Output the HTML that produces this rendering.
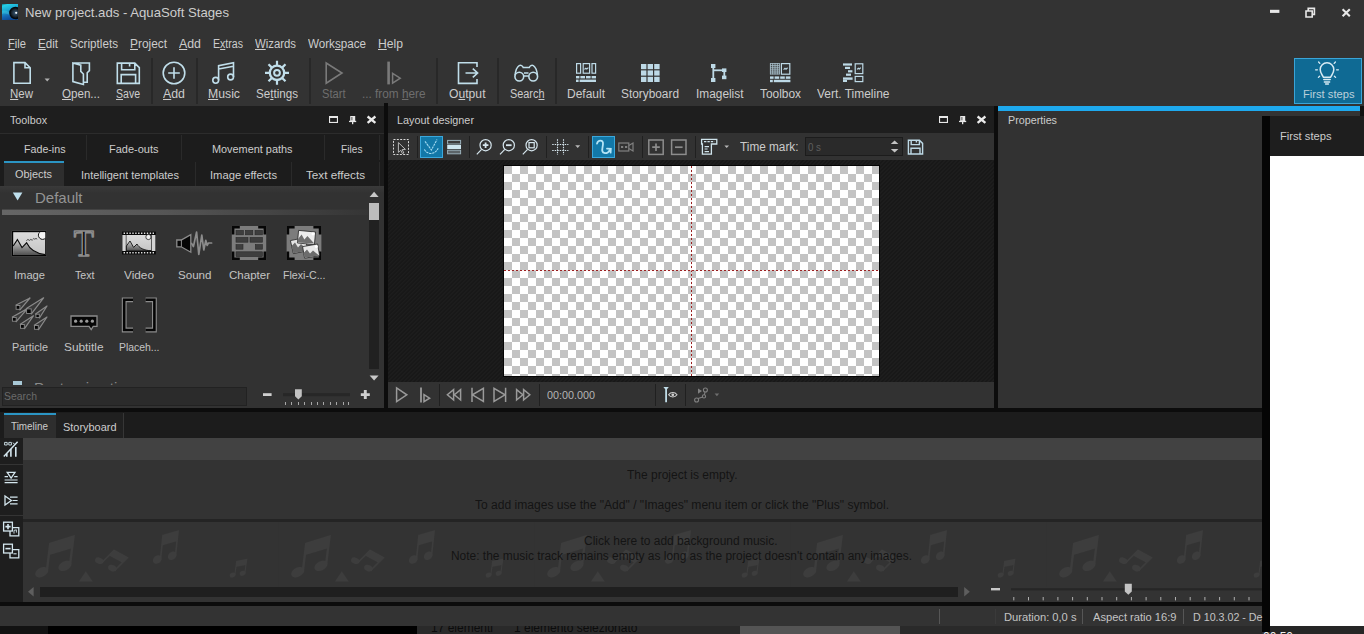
<!DOCTYPE html>
<html><head><meta charset="utf-8"><title>New project.ads - AquaSoft Stages</title>
<style>
html,body{margin:0;padding:0;}
body{width:1364px;height:634px;overflow:hidden;background:#333333;position:relative;font-family:"Liberation Sans",sans-serif;font-size:11px;color:#cccccc;}
.b{position:absolute;}
.t{position:absolute;white-space:nowrap;display:inline-block;transform-origin:0 50%;line-height:16px;height:16px;}
u{text-decoration:underline;text-underline-offset:1px;}
svg{position:absolute;overflow:visible;}
.ic{fill:none;stroke:#c0deea;stroke-width:1.6;}
.ig{fill:none;stroke:#7a7a7a;stroke-width:1.6;}
.sep{position:absolute;width:1px;background:#232323;}
.hatch{background-color:#181818;background-image:repeating-linear-gradient(135deg,rgba(255,255,255,0.022) 0,rgba(255,255,255,0.022) 1.2px,transparent 1.6px,transparent 2.83px);}
.chk{background:repeating-conic-gradient(#c3c3c3 0% 25%,#ffffff 0% 50%) 8px 0/16px 16px;}
</style></head><body>

<!-- ===== title/menu/toolbar background ===== -->
<div class="b" style="left:0;top:0;width:1364px;height:106px;background:#333333"></div>

<!-- dark base under panels -->
<div class="b" style="left:0;top:106px;width:1262px;height:500px;background:#0c0c0c"></div>

<!-- ===== Toolbox panel ===== -->
<div class="b" style="left:0;top:106px;width:384px;height:28px;background:#1e1e1e"></div>
<div class="b" style="left:0;top:133px;width:384px;height:1px;background:#2c2c2c"></div>
<div class="b" style="left:0;top:134px;width:384px;height:52px;background:#1c1c1c"></div>
<div class="b" style="left:4px;top:161px;width:60px;height:25px;background:#2e2e2e"></div>
<div class="b" style="left:4px;top:161px;width:60px;height:2px;background:#2b95c4"></div>
<div class="b" style="left:0;top:186px;width:384px;height:222px;background:#323232"></div>
<div class="b" style="left:0;top:186px;width:384px;height:7px;background:linear-gradient(#3a3a3a,#323232)"></div>
<!-- tab separators -->
<div class="sep" style="left:86px;top:135px;height:25px;background:#2a2a2a"></div>
<div class="sep" style="left:181px;top:135px;height:25px;background:#2a2a2a"></div>
<div class="sep" style="left:324px;top:135px;height:25px;background:#2a2a2a"></div>
<div class="sep" style="left:379px;top:135px;height:25px;background:#2a2a2a"></div>
<div class="sep" style="left:195px;top:162px;height:24px;background:#2a2a2a"></div>
<div class="sep" style="left:291px;top:162px;height:24px;background:#2a2a2a"></div>
<div class="sep" style="left:379px;top:162px;height:24px;background:#2a2a2a"></div>

<!-- ===== Layout designer ===== -->
<div class="b" style="left:388px;top:106px;width:606px;height:27px;background:#1e1e1e"></div>
<div class="b" style="left:388px;top:133px;width:606px;height:27px;background:#323232"></div>
<div class="b hatch" style="left:388px;top:160px;width:606px;height:222px;"></div>
<div class="b" style="left:503px;top:165px;width:377px;height:212px;background:#050505"></div>
<div class="b chk" style="left:504px;top:166px;width:375px;height:210px;"></div>
<div class="b" style="left:691px;top:166px;width:1px;height:210px;background:repeating-linear-gradient(180deg,#9a2020 0,#9a2020 2px,rgba(255,220,220,0.5) 2px,rgba(255,220,220,0.5) 4px)"></div>
<div class="b" style="left:504px;top:270px;width:375px;height:1px;background:repeating-linear-gradient(90deg,#9a2020 0,#9a2020 2px,rgba(255,220,220,0.5) 2px,rgba(255,220,220,0.5) 4px)"></div>
<div class="b" style="left:388px;top:382px;width:606px;height:26px;background:#323232"></div>

<!-- ===== Properties ===== -->
<div class="b" style="left:998px;top:106px;width:264px;height:302px;background:#323232"></div>
<div class="b" style="left:998px;top:106px;width:362px;height:5px;background:#1ea9ee"></div>
<div class="b" style="left:1360px;top:106px;width:4px;height:10px;background:#111"></div>

<!-- ===== First steps panel ===== -->
<div class="b" style="left:1262px;top:116px;width:8px;height:516px;background:#050505"></div>
<div class="b" style="left:1270px;top:116px;width:94px;height:40px;background:#1e1e1e"></div>
<div class="b" style="left:1270px;top:156px;width:94px;height:470px;background:#ffffff"></div>
<div class="b" style="left:1270px;top:626px;width:94px;height:8px;background:#262626"></div>

<!-- ===== First steps button ===== -->
<div class="b" style="left:1294px;top:58px;width:66px;height:44px;background:#0f6a94;border:1px solid #3aa5d8"></div>

<!-- ===== Timeline ===== -->
<div class="b" style="left:0;top:412px;width:1262px;height:26px;background:#1c1c1c"></div>
<div class="b" style="left:4px;top:413px;width:52px;height:25px;background:#2e2e2e"></div>
<div class="b" style="left:4px;top:413px;width:52px;height:2px;background:#2b95c4"></div>
<div class="b" style="left:56px;top:413px;width:67px;height:25px;background:#202020"></div>
<div class="sep" style="left:123px;top:413px;height:25px;background:#363636"></div>
<div class="b" style="left:0;top:438px;width:23px;height:164px;background:#1e1e1e"></div>
<div class="b" style="left:23px;top:438px;width:1239px;height:22px;background:#424242"></div>
<div class="b" style="left:23px;top:460px;width:1239px;height:59px;background:#333333"></div>
<div class="b" style="left:23px;top:519px;width:1239px;height:3px;background:#242424"></div>
<div class="b" style="left:23px;top:522px;width:1239px;height:80px;background:#333333"></div>
<div class="b" style="left:40px;top:587px;width:918px;height:10px;background:#1f1f1f"></div>

<!-- ===== Status bar ===== -->
<div class="b" style="left:0;top:606px;width:1262px;height:20px;background:#333333"></div>
<div class="b" style="left:0;top:626px;width:1262px;height:8px;background:#2a2a2a"></div>
<div class="b" style="left:0;top:626px;width:48px;height:8px;background:#121212"></div>
<div class="b" style="left:48px;top:626px;width:369px;height:8px;background:#000"></div>
<div class="b" style="left:740px;top:626px;width:160px;height:8px;background:#545454"></div>

<!-- ===== App icon ===== -->
<svg style="left:2px;top:4px;overflow:hidden" width="16" height="16.4" viewBox="0 0 16 16.4">
<defs><linearGradient id="ag" x1="0" y1="0" x2="0.3" y2="1"><stop offset="0" stop-color="#0e6e7c"/><stop offset="0.12" stop-color="#25cfe6"/><stop offset="0.45" stop-color="#1aa4d0"/><stop offset="0.75" stop-color="#1468b4"/><stop offset="1" stop-color="#0d4a96"/></linearGradient>
<radialGradient id="lg" cx="0.5" cy="0.5" r="0.5"><stop offset="0" stop-color="#3a5a78"/><stop offset="0.55" stop-color="#20303e"/><stop offset="1" stop-color="#06090c"/></radialGradient></defs>
<rect x="0" y="0" width="16" height="16.4" fill="url(#ag)"/>
<path d="M0,7 C4,5.5 7,8.5 10,9.5 L10,12 C6,10 3,9 0,10 Z" fill="#4fd6e8" opacity="0.35"/>
<circle cx="13.4" cy="9" r="5.6" fill="url(#lg)"/><circle cx="13.4" cy="9" r="5.6" fill="none" stroke="#03080c" stroke-width="1.2"/><circle cx="14.2" cy="8.8" r="1.1" fill="#f2f6fa"/>
</svg>
<!-- window buttons -->
<svg style="left:1265px;top:5px" width="95" height="16" viewBox="0 0 95 16">
<rect x="5" y="4.8" width="9.4" height="3.1" fill="#e8e8e8"/>
<path d="M43.2,5.6 V3.4 H49.4 V9.4 H47.2 M41,6 h6.2 v6 h-6.2 z" fill="none" stroke="#e8e8e8" stroke-width="1.6"/>
<path d="M77.6,4.2 l7.2,7 M84.8,4.2 l-7.2,7" stroke="#e8e8e8" stroke-width="2.1" fill="none"/>
</svg>

<!-- ===== Main toolbar separators ===== -->
<div class="sep" style="left:151px;top:58px;height:46px;width:2px;background:#282828"></div>
<div class="sep" style="left:196px;top:58px;height:46px;width:2px;background:#282828"></div>
<div class="sep" style="left:309px;top:58px;height:46px;width:2px;background:#282828"></div>
<div class="sep" style="left:436px;top:58px;height:46px;width:2px;background:#282828"></div>
<div class="sep" style="left:497px;top:58px;height:46px;width:2px;background:#282828"></div>
<div class="sep" style="left:555px;top:58px;height:46px;width:2px;background:#282828"></div>
<div class="b" style="left:384px;top:103px;width:4px;height:3px;background:#0c0c0c"></div>

<!-- ===== Main toolbar icons (one svg in page coords) ===== -->
<svg style="left:0;top:0" width="1364" height="110" viewBox="0 0 1364 110">
<g class="ic" stroke-width="2.15" stroke-linejoin="miter">
<!-- New -->
<path d="M13.9,62.6 H25 L30.2,67.8 V83.3 H13.9 Z M25,62.6 V67.8 H30.2"/>
<!-- Open -->
<path d="M72.9,63 H89.4 V70.6 L87.2,72.8 V82.3 H83.6 M72.9,63 L80.8,65.2 V71.4 L83.4,74 V84.4 L72.9,81.6 Z"/>
<!-- Save -->
<path d="M117.3,63.1 H134.8 L139.3,67.6 V83.4 H117.3 Z M121.6,63.1 V69.8 H134.8 V63.1 M129.6,63.1 V66.6 M121.2,83.4 V74.6 H135.6 V83.4"/>
<!-- Add -->
<circle cx="174" cy="73" r="10.8"/><path d="M174,67.2 V78.8 M168.2,73 H179.8"/>
<!-- Music -->
<circle cx="215.7" cy="80.3" r="2.9"/><circle cx="230.6" cy="77" r="2.9"/>
<path d="M218.6,80.3 V65.6 L233.5,62.8 V77 M218.6,69 L233.5,66.2"/>
<!-- Settings -->
<circle cx="277" cy="72.8" r="7.2" stroke-width="2.3"/><circle cx="277" cy="72.8" r="2.9" stroke-width="2"/>
<path d="M277.0,65.2 L277.0,60.8 M282.4,67.4 L285.5,64.3 M284.6,72.8 L289.0,72.8 M282.4,78.2 L285.5,81.3 M277.0,80.4 L277.0,84.8 M271.6,78.2 L268.5,81.3 M269.4,72.8 L265.0,72.8 M271.6,67.4 L268.5,64.3" stroke-width="2.2"/>
<!-- Output -->
<path d="M477,67 V62.8 H458.5 V83.4 H477 V79"/><path d="M465.5,73 H477.6 M472.8,68.6 L477.6,73 L472.8,77.4"/>
<!-- Search -->
<circle cx="519.3" cy="76.6" r="4.4" stroke-width="1.6"/><circle cx="533.2" cy="76.6" r="4.4" stroke-width="1.6"/>
<path d="M515,75.4 C515.6,70.5 517.4,66.6 519.2,65.6 C520.8,64.9 522.6,65.8 523.2,67.6 H529.3 C529.9,65.8 531.7,64.9 533.3,65.6 C535.1,66.6 536.9,70.5 537.5,75.4 M523.7,76 H528.8 M524,73 H528.5" stroke-width="1.5"/>
</g>
<!-- disabled: Start / from here -->
<g class="ig" stroke-width="2.1" stroke="#7c7c7c">
<path d="M326.2,63 V83.2 L342,73 Z"/>
<path d="M388.6,61.6 V84.4" stroke-width="2.6"/><path d="M392.6,73.4 V83.2 L400.2,78.2 Z" stroke-width="1.5"/>
</g>
<!-- dropdown arrow after New -->
<path d="M44.6,78.6 h5.2 l-2.6,2.8 z" fill="#b0b0b0"/>
<!-- Default layout icon -->
<g fill="none" stroke="#bdd9e6" stroke-width="1.2">
<rect x="576.6" y="63.6" width="4" height="9.6"/><rect x="583.2" y="63.6" width="6.4" height="9.6"/><rect x="592" y="63.6" width="3.6" height="9.6"/>
<path d="M584.4,69.4 l1.4,-1.2 l1,0.8 l1.6,-1.4"/>
</g>
<g fill="#bdd9e6">
<rect x="576" y="76" width="3.4" height="2.4"/><rect x="580.4" y="76" width="4.6" height="2.4"/><rect x="586" y="76" width="4.6" height="2.4"/><rect x="591.6" y="76" width="4.4" height="2.4"/>
<rect x="576" y="79.6" width="2.6" height="2.4"/><rect x="579.6" y="79.6" width="16.4" height="2.4"/>
<!-- Storyboard grid -->
<rect x="641" y="64" width="5.4" height="5.2"/><rect x="647.6" y="64" width="5.4" height="5.2"/><rect x="654.2" y="64" width="5.4" height="5.2"/>
<rect x="641" y="70.4" width="5.4" height="5.2"/><rect x="647.6" y="70.4" width="5.4" height="5.2"/><rect x="654.2" y="70.4" width="5.4" height="5.2"/>
<rect x="641" y="76.8" width="5.4" height="5.2"/><rect x="647.6" y="76.8" width="5.4" height="5.2"/><rect x="654.2" y="76.8" width="5.4" height="5.2"/>
<!-- Imagelist -->
<rect x="711" y="64" width="4.4" height="4"/><rect x="711" y="78" width="4.4" height="4"/><rect x="722" y="68.4" width="4.4" height="3.6"/><rect x="722" y="75.6" width="4.4" height="3.6"/>
<rect x="712.4" y="66" width="1.8" height="14"/><rect x="713" y="69.4" width="11" height="1.8"/><rect x="723.4" y="70" width="1.8" height="8"/>
<!-- Toolbox icon -->
<rect x="770" y="76.4" width="3.6" height="2.4"/><rect x="774.6" y="76.4" width="4.6" height="2.4"/><rect x="780.2" y="76.4" width="4.6" height="2.4"/><rect x="785.8" y="76.4" width="4.6" height="2.4"/>
<rect x="770" y="79.8" width="2.8" height="2.4"/><rect x="773.8" y="79.8" width="16.6" height="2.4"/>
<!-- Vert timeline bars -->
<rect x="843" y="63.4" width="9" height="2.2"/><rect x="845" y="66.8" width="5" height="2.2"/><rect x="848" y="70.2" width="4.4" height="2.2"/><rect x="846" y="73.6" width="5" height="2.2"/><rect x="843" y="77.4" width="9.6" height="2.4"/><rect x="843" y="80" width="4" height="2"/>
</g>
<g fill="none" stroke="#bdd9e6" stroke-width="1.2">
<rect x="781.4" y="63.6" width="8.4" height="10.6"/><path d="M783.6,69.6 l1.4,-1.2 l1,0.8 l1.6,-1.4"/>
<rect x="855.2" y="63.8" width="7.6" height="9.8"/><path d="M857,69.4 l1.4,-1.2 l1,0.8 l1.4,-1.4"/>
<rect x="855.2" y="76.4" width="7.6" height="5.2"/>
</g>
<!-- toolbox fine grid -->
<g stroke="#bdd9e6" stroke-width="0.9" opacity="0.85">
<path d="M770,63.6 H779.6 M770,65.7 H779.6 M770,67.8 H779.6 M770,69.9 H779.6 M770,72 H779.6 M770,74 H779.6"/>
<path d="M770.4,63.2 V74.4 M772.7,63.2 V74.4 M775,63.2 V74.4 M777.3,63.2 V74.4 M779.4,63.2 V74.4"/>
</g>
<!-- First steps bulb -->
<g fill="none" stroke="#d8ebf4" stroke-width="1.5" stroke-linecap="round">
<path d="M1323.4,77.2 C1322.4,75 1320.2,73.4 1320.2,69.6 A6.8,6.8 0 0 1 1333.8,69.6 C1333.8,73.4 1331.6,75 1330.6,77.2 Z"/>
<path d="M1323.8,79.6 H1330.2 M1324.4,82 H1329.6 M1325.6,84 H1328.4"/>
<path d="M1315.6,69.8 H1317.4 M1336.6,69.8 H1338.4 M1318.6,62 L1319.8,63.4 M1335.4,62 L1334.2,63.4 M1318.4,77.4 L1319.6,76.2 M1335.6,77.4 L1334.4,76.2" stroke-width="1.3"/>
</g>
</svg>
<!-- ===== Panel header icons (max / pin / close) ===== -->
<svg style="left:0;top:100px" width="1364" height="40" viewBox="0 100 1364 40">
<g transform="translate(-610,0)">
<rect x="939" y="116" width="9" height="7" fill="#e8e8e8"/><rect x="940.1" y="118" width="6.8" height="3.9" fill="#1e1e1e"/>
<rect x="960.2" y="116" width="5" height="5.2" fill="#e8e8e8"/><rect x="961.4" y="117" width="1" height="3.4" fill="#555"/><rect x="959" y="120.8" width="7.2" height="1.3" fill="#e8e8e8"/><rect x="962" y="122" width="1.3" height="2.2" fill="#e8e8e8"/>
<path d="M977.6,116.5 l7.8,6.3 M985.4,116.5 l-7.8,6.3" stroke="#ececec" stroke-width="2.3" fill="none"/>
</g>
<g transform="translate(0,0)">
<rect x="939" y="116" width="9" height="7" fill="#e8e8e8"/><rect x="940.1" y="118" width="6.8" height="3.9" fill="#1e1e1e"/>
<rect x="960.2" y="116" width="5" height="5.2" fill="#e8e8e8"/><rect x="961.4" y="117" width="1" height="3.4" fill="#555"/><rect x="959" y="120.8" width="7.2" height="1.3" fill="#e8e8e8"/><rect x="962" y="122" width="1.3" height="2.2" fill="#e8e8e8"/>
<path d="M977.6,116.5 l7.8,6.3 M985.4,116.5 l-7.8,6.3" stroke="#ececec" stroke-width="2.3" fill="none"/>
</g>
</svg>

<!-- ===== Layout designer toolbar ===== -->
<div class="sep" style="left:417px;top:136px;height:22px;background:#202020"></div>
<div class="sep" style="left:469px;top:136px;height:22px;background:#202020"></div>
<div class="sep" style="left:546px;top:136px;height:22px;background:#202020"></div>
<div class="sep" style="left:588px;top:136px;height:22px;background:#202020"></div>
<div class="sep" style="left:642px;top:136px;height:22px;background:#202020"></div>
<div class="sep" style="left:695px;top:136px;height:22px;background:#202020"></div>
<div class="b" style="left:420px;top:136px;width:21px;height:20px;background:#1278a8;border:1px solid #3aa8dc"></div>
<div class="b" style="left:592px;top:136px;width:21px;height:20px;background:#1278a8;border:1px solid #3aa8dc"></div>
<div class="b" style="left:805px;top:137px;width:96px;height:17px;background:#2a2a2a;border:1px solid #1c1c1c"></div>
<svg style="left:385px;top:130px" width="560" height="32" viewBox="385 130 560 32">
<!-- select -->
<rect x="393.5" y="139.5" width="15" height="15" fill="none" stroke="#d8d8d8" stroke-width="1" stroke-dasharray="2 1.33"/>
<path d="M398.4,142.6 V152.4 L400.8,150.2 L402.4,153.6 L403.8,153 L402.2,149.6 L405.4,149.4 Z" fill="#2c2c2c" stroke="#c8c8c8" stroke-width="0.9"/>
<!-- active V -->
<g fill="none" stroke="#a4dcf2" stroke-width="1.05" stroke-dasharray="2.4 0.7">
<path d="M425,141.4 L431.4,150 L437,139.6"/><path d="M424.4,149.4 C427,155 435,155 438.2,148.2"/>
</g>
<!-- layers -->
<rect x="447.6" y="140.4" width="13" height="3.6" fill="#3a3a3a" stroke="#9ab0ba" stroke-width="1"/>
<rect x="447.2" y="145" width="13.8" height="4" fill="#cfe6ef"/>
<rect x="447.6" y="150.2" width="13" height="3.6" fill="#5c6468" stroke="#9ab0ba" stroke-width="1"/>
<!-- zoom icons -->
<g fill="none" stroke="#d6e6ee" stroke-width="1.2">
<circle cx="485.6" cy="145.2" r="5.6"/><path d="M481.6,149.4 L476.8,154.4"/><path d="M485.6,142.4 V148 M482.8,145.2 H488.4" stroke-width="1.8"/>
<circle cx="508.8" cy="145.2" r="5.6"/><path d="M504.8,149.4 L500,154.4"/><path d="M506,145.2 H511.6" stroke-width="1.8"/>
<circle cx="531.6" cy="145.2" r="5.6"/><path d="M527.6,149.4 L522.8,154.4"/><rect x="529" y="142.6" width="5.2" height="5.2" stroke-width="1.2"/>
</g>
<!-- grid -->
<g fill="none" stroke="#d6e6ee" stroke-width="1.1" stroke-dasharray="1.5 1">
<path d="M557.5,139.2 V154.8 M563.5,139.2 V154.8 M552.2,144.5 H568.4 M552.2,150.5 H568.4"/>
</g>
<path d="M575.2,145.2 h5 l-2.5,2.8 z" fill="#b8b8b8"/>
<!-- curvy arrow -->
<path d="M597,143.6 C598,139.6 603.4,139.4 603,144 C602.6,148.4 600.6,152.6 605,153.2 C607.4,153.4 609,151.6 610.4,149.4 M607,148.6 L610.8,148.8 L610.6,152.6" fill="none" stroke="#b4e4f6" stroke-width="1.8" stroke-linecap="round"/>
<!-- camera -->
<g fill="none" stroke="#808080" stroke-width="1.2">
<rect x="618.8" y="143" width="10" height="8"/><path d="M628.8,145.6 L633,143 V151 L628.8,148.4"/><path d="M621,147 h2.2 M625,147 h2.2" stroke-width="1.8"/>
</g>
<!-- plus / minus boxes -->
<g fill="none" stroke="#8c8c8c" stroke-width="1.5">
<rect x="648.8" y="140" width="14.4" height="14.4"/><path d="M656,143.4 V151 M652.2,147.2 H659.8" stroke-width="1.7"/>
<rect x="671.6" y="140" width="14.4" height="14.4"/><path d="M675,147.2 H682.6" stroke-width="1.7"/>
</g>
<!-- align -->
<g fill="none" stroke="#cfe4ec" stroke-width="1.3">
<path d="M701.6,139.4 H716.8 V144 H711.4 V154.2 H702.4 V144 H701.6 Z"/><path d="M704,141.6 h10.4" stroke-dasharray="2.4 1"/><path d="M704.6,146.6 h4.4 M704.6,149 h3 M704.6,151.6 h4.4" stroke-width="1.1"/>
</g>
<path d="M724.4,145.4 h4.6 l-2.3,2.6 z" fill="#b8b8b8"/>
<!-- spinner -->
<path d="M890.8,144 l3.8,-3.6 l3.8,3.6 z M890.8,149 l3.8,3.6 l3.8,-3.6 z" fill="#c4c4c4"/>
<!-- save small -->
<g fill="none" stroke="#bdd9e6" stroke-width="1.4">
<path d="M908.4,140.2 H919.4 L922.6,143.4 V154 H908.4 Z M911.2,140.2 V144.6 H919.4 V140.2 M916.4,140.2 V142.6 M911,154 V148.2 H920 V154"/>
</g>
</svg>

<!-- ===== Playback bar ===== -->
<div class="sep" style="left:439px;top:384px;height:22px;background:#202020"></div>
<div class="sep" style="left:539px;top:384px;height:22px;background:#202020"></div>
<div class="sep" style="left:655px;top:384px;height:22px;background:#202020"></div>
<div class="sep" style="left:685px;top:384px;height:22px;background:#202020"></div>
<svg style="left:385px;top:380px" width="350" height="30" viewBox="385 380 350 30">
<g fill="none" stroke="#9a9a9a" stroke-width="1.5" stroke-linejoin="miter">
<path d="M396.6,388 V401.6 L406.8,394.8 Z"/>
<path d="M421,387.4 V402.4" stroke-width="1.8"/><path d="M424,394.6 V401.6 L429.6,398.2 Z"/>
<path d="M453.6,389.6 V400 L447.4,394.8 Z M460.6,389.6 V400 L454.4,394.8 Z"/>
<path d="M483.4,388.4 V401.4 L472.4,394.8 Z M472,387.8 V402"/>
<path d="M494,388.4 V401.4 L505,394.8 Z M505.6,387.8 V402"/>
<path d="M516.6,389.6 V400 L522.8,394.8 Z M523.6,389.6 V400 L529.8,394.8 Z"/>
</g>
<!-- marker w/ eye -->
<path d="M663.4,387 h5.4 l-1.8,2.2 v13 h-1.8 v-13 z" fill="#c0dce8"/>
<path d="M668.6,394.8 C670.6,391.8 675,391.8 677,394.8 C675,397.8 670.6,397.8 668.6,394.8 Z" fill="none" stroke="#d0d0d0" stroke-width="1.1"/><circle cx="672.8" cy="394.8" r="1.4" fill="#d0d0d0"/>
<!-- path icon grey -->
<g fill="none" stroke="#808080" stroke-width="1.1"><circle cx="696.6" cy="400" r="2"/><circle cx="705.4" cy="390" r="2"/><circle cx="704" cy="396.4" r="1.6"/><path d="M698,398.6 L702.8,397 M704.4,394.8 L705,392"/></g>
<path d="M698,388.4 v5.4 l4,-2.7 z" fill="#808080"/>
<path d="M714.6,393.6 h4.6 l-2.3,2.6 z" fill="#6e6e6e"/>
</svg>
<!-- ===== Toolbox content ===== -->
<!-- section header triangle + gradient line -->
<svg style="left:0;top:186px" width="384" height="32" viewBox="0 186 384 32">
<defs><linearGradient id="hl" x1="0" x2="1" y1="0" y2="0"><stop offset="0" stop-color="#666"/><stop offset="0.45" stop-color="#555"/><stop offset="1" stop-color="#353535"/></linearGradient></defs>
<path d="M12.8,192.4 h9.6 l-4.8,8 z" fill="#bfe0ee"/>
<rect x="2" y="209.6" width="366" height="5.4" fill="url(#hl)"/>
</svg>
<!-- scrollbar -->
<div class="b" style="left:369px;top:203px;width:10px;height:166px;background:#212121"></div>
<div class="b" style="left:369px;top:203px;width:10px;height:17px;background:#bcbcbc"></div>
<svg style="left:366px;top:188px" width="16" height="196" viewBox="366 188 16 196">
<path d="M369.6,197 h9 l-4.5,-5.2 z" fill="#c8c8c8"/><path d="M369.6,375.4 h9 l-4.5,5.2 z" fill="#c8c8c8"/>
</svg>
<!-- clipped next section hint -->
<div class="b" style="left:0;top:380px;width:366px;height:5px;overflow:hidden"><span style="position:absolute;left:34px;top:0;font-size:15px;line-height:15px;color:#8a8a8a;white-space:nowrap">Post-animation</span><div style="position:absolute;left:13px;top:1px;width:9px;height:4px;background:#a8c8d6"></div></div>
<!-- search box row -->
<div class="b" style="left:0;top:385px;width:384px;height:23px;background:#323232"></div>
<div class="b" style="left:2px;top:387px;width:243px;height:17px;background:#2b2b2b;border:1px solid #222"></div>
<svg style="left:255px;top:385px" width="125" height="22" viewBox="255 385 125 22">
<rect x="263" y="393.2" width="8.6" height="2.8" fill="#cfcfcf"/>
<rect x="283" y="393.2" width="67" height="3" fill="#272727"/>
<path d="M295,389.2 h6.8 v7 l-3.4,3.4 l-3.4,-3.4 z" fill="#c2c2c2"/>
<path d="M285.5,402 v3 M291.5,402 v3 M298.5,402 v3 M304.5,402 v3 M311.5,402 v3 M317.5,402 v3 M323.5,402 v3 M330.5,402 v3 M336.5,402 v3 M343.5,402 v3 M348.5,402 v3" stroke="#a8a8a8" stroke-width="1"/>
<path d="M360.8,394.6 h9 M365.3,390.1 v9" stroke="#cfcfcf" stroke-width="2.9"/>
</svg>

<!-- ===== object icons ===== -->
<svg style="left:0;top:220px" width="340" height="120" viewBox="0 220 340 120">
<defs>
<linearGradient id="sky" x1="0" y1="0" x2="0" y2="1"><stop offset="0" stop-color="#dcdcdc"/><stop offset="1" stop-color="#c4c4c4"/></linearGradient>
<linearGradient id="mnt" x1="0" y1="0" x2="0" y2="1"><stop offset="0" stop-color="#d0d0d0"/><stop offset="1" stop-color="#505050"/></linearGradient>
</defs>
<!-- Image -->
<rect x="11.8" y="230.8" width="34.8" height="25.6" fill="#6e6e6e"/>
<rect x="12.6" y="231.6" width="33.2" height="24" fill="url(#sky)" stroke="#050505" stroke-width="1.2"/>
<path d="M13.2,246 L17.4,239.6 L22,247.6 L26.6,242.8 C30,250 36,253.6 45.2,254.6 V255 H13.2 Z" fill="url(#mnt)"/>
<path d="M13.2,246 L17.4,239.6 L22,247.6 L26.6,242.8 C30,250 36,253.6 45.2,254.6" fill="none" stroke="#0a0a0a" stroke-width="1.1"/>
<clipPath id="imc"><rect x="13.2" y="232.2" width="32" height="22.8"/></clipPath><circle cx="42.6" cy="235.2" r="4.2" fill="#f4f4f4" stroke="#111" stroke-width="1" clip-path="url(#imc)"/>
<path d="M26.4,240.6 q1.6,-2.2 3,-0.2 q1.4,-2 3,0 M32.6,239.4 q1.2,-1.6 2.2,-0.2 q1.2,-1.6 2.4,0" fill="none" stroke="#3a3a3a" stroke-width="0.9"/>
<!-- Text T (real glyph) -->
<text transform="translate(83.9,256.2) scale(0.89,1)" x="0" y="0" text-anchor="middle" font-family="Liberation Serif, serif" font-size="37" fill="#040404" stroke="#8c8c8c" stroke-width="1.6" stroke-linejoin="round">T</text>
<!-- Video -->
<rect x="122" y="231.6" width="33.8" height="22.8" fill="#080808"/>
<rect x="126.4" y="235" width="25" height="16" fill="url(#sky)"/>
<rect x="122.4" y="235" width="3.4" height="16" fill="#d4d4d4"/><rect x="152" y="235" width="3.4" height="16" fill="#d4d4d4"/>
<path d="M126.4,246 L130,241 L133.6,247.4 L137,244 C139,248 144,250.4 151.4,250.8 H126.4 Z" fill="url(#mnt)" stroke="#111" stroke-width="0.9"/>
<circle cx="148.4" cy="237" r="2.6" fill="#f0f0f0" stroke="#222" stroke-width="0.8"/>
<path d="M123.6,233.2 H155" stroke="#e0e0e0" stroke-width="1.4" stroke-dasharray="1.4 1.5"/>
<path d="M123.6,252.8 H155" stroke="#e0e0e0" stroke-width="1.4" stroke-dasharray="1.4 1.5"/>
<!-- Sound -->
<path d="M176.8,240 h4.4 l9.6,-5.4 v17.6 l-9.6,-5.4 h-4.4 z" fill="#060606" stroke="#8c8c8c" stroke-width="1.3"/>
<path d="M181.4,240 v6.8" stroke="#8c8c8c" stroke-width="1"/>
<path d="M191.6,243.4 L193.4,246.6 L196.6,232 L198.8,254.4 L201.8,235.2 L203.8,250 L205.8,240.4 L207.2,245.4 L208.4,243 H211.6" fill="none" stroke="#8c8c8c" stroke-width="1.7" stroke-linejoin="round" stroke-linecap="round"/>
<!-- Chapter -->
<rect x="231.8" y="226" width="34.4" height="34" fill="#7c7c7c"/>
<path d="M231.8,226 h8 v2.4 h-5.4 v6 h-2.6 z M266.2,226 h-8 v2.4 h5.4 v6 h2.6 z M231.8,260 h8 v-2.4 h-5.4 v-6 h-2.6 z M266.2,260 h-8 v-2.4 h5.4 v-6 h2.6 z" fill="#060606"/>
<g fill="#3e3e3e" stroke="#2a2a2a" stroke-width="0.6">
<rect x="236" y="230.4" width="7.4" height="4.4"/><rect x="245.4" y="230.4" width="7.4" height="4.4"/><rect x="255" y="230.4" width="7.4" height="4.4"/>
<rect x="236" y="237.4" width="12" height="4.8"/><rect x="250" y="237.4" width="12.4" height="4.8"/>
<rect x="236" y="244.6" width="7" height="4.6"/><rect x="255.4" y="244.6" width="7" height="4.6"/>
<rect x="236" y="251.8" width="26.4" height="4.8"/>
</g>
<!-- Flexi collage -->
<rect x="286.6" y="226" width="34.8" height="34" fill="#7c7c7c"/>
<path d="M286.6,226 h8 v2.4 h-5.4 v6 h-2.6 z M321.4,226 h-8 v2.4 h5.4 v6 h2.6 z M286.6,260 h8 v-2.4 h-5.4 v-6 h-2.6 z M321.4,260 h-8 v-2.4 h5.4 v-6 h2.6 z" fill="#060606"/>
<g stroke="#222" stroke-width="0.8">
<path d="M290.4,240.6 L305,237.6 L308,250.6 L293.4,253.6 Z" fill="#e4e4e4"/>
<path d="M291.6,246 L295,242.4 L298,247.4 L301,244 L307.6,250.4 L293.6,253.2 Z" fill="#6a6a6a" stroke="none"/>
<path d="M298.6,230.4 L315.6,232 L314.4,244.6 L297.4,243 Z" fill="#ececec"/>
<path d="M298,239 L301.6,234.6 L304.4,239.4 L307.4,236 L314.2,243.6 L297.6,242.6 Z" fill="#707070" stroke="none"/>
<circle cx="313" cy="233.8" r="1.6" fill="#fff" stroke="none"/>
<path d="M302.6,246.6 L317.6,244 L319.6,255.6 L304.6,258.2 Z" fill="#e8e8e8"/>
<path d="M303.6,253 L307,249.6 L310,253.4 L313,250.6 L319,255.4 L304.8,257.8 Z" fill="#6c6c6c" stroke="none"/>
<circle cx="316.4" cy="246.6" r="1.5" fill="#fff" stroke="none"/>
</g>
<!-- Particle -->
<g fill="#3a3a3a" stroke="#8a8a8a" stroke-width="1.2" stroke-linejoin="round">
<path d="M19.9,309.8 L30.0,298.0 L16.1,305.0 Z"/>
<path d="M31.4,313.9 L43.6,297.8 L26.4,308.5 Z"/>
<path d="M16.2,321.7 L27.4,308.6 L12.4,316.9 Z"/>
<path d="M39.6,317.8 L47.0,306.0 L35.6,314.0 Z"/>
<path d="M24.5,328.6 L33.4,315.8 L20.3,324.2 Z"/>
<path d="M38.5,329.6 L47.0,317.0 L34.3,325.2 Z"/>
</g>
<g fill="#050505" stroke="#8a8a8a" stroke-width="0.9">
<rect x="16.1" y="305.5" width="3.8" height="3.8"/>
<rect x="26.6" y="308.9" width="4.6" height="4.6"/>
<rect x="12.4" y="317.4" width="3.8" height="3.8"/>
<rect x="35.9" y="314.2" width="3.4" height="3.4"/>
<rect x="20.5" y="324.5" width="3.8" height="3.8"/>
<rect x="34.5" y="325.5" width="3.8" height="3.8"/>
</g>
<!-- Subtitle -->
<path d="M71,316 H97 V326.4 H93.2 L91.2,329.6 L89,326.4 H71 Z" fill="#060606" stroke="#8c8c8c" stroke-width="1.3"/>
<g fill="#9a9a9a"><circle cx="75.6" cy="321.2" r="1.6"/><circle cx="81.2" cy="321.2" r="1.6"/><circle cx="86.8" cy="321.2" r="1.6"/><circle cx="92.4" cy="321.2" r="1.6"/></g>
<!-- Placeholder brackets -->
<path d="M133,299.8 H124.2 V330 H133 M145.6,299.8 H154.4 V330 H145.6" fill="none" stroke="#8c8c8c" stroke-width="4.8"/>
<path d="M133,299.8 H124.2 V330 H133 M145.6,299.8 H154.4 V330 H145.6" fill="none" stroke="#050505" stroke-width="2.6" stroke-linecap="butt"/>
</svg>
<!-- ===== Timeline ===== -->
<!-- music note tiles -->
<svg style="left:23px;top:522px" width="1239" height="65" viewBox="0 0 1239 65">
<defs>
<pattern id="mus" x="0" y="0" width="256" height="65" patternUnits="userSpaceOnUse">
<rect x="255.5" y="0" width="1" height="65" fill="#303030"/>
<g fill="#3d3d3d">
<g transform="translate(17,11) skewX(-7) scale(1.02,1.06)"><ellipse cx="6.4" cy="37" rx="6.4" ry="4.5" transform="rotate(-24 6.4 37)"/><ellipse cx="28.4" cy="31" rx="6.4" ry="4.5" transform="rotate(-24 28.4 31)"/><path d="M10.2,37 V9.4 L34.4,2 V31 H32.2 V14.6 L12.4,20.6 V37 Z"/></g>
<path d="M56,59.6 L62.8,49.6 L69.6,59.6 Z"/>
<g transform="translate(90.5,18.4) rotate(45) scale(0.66)"><ellipse cx="6.4" cy="37" rx="6.4" ry="4.5" transform="rotate(-24 6.4 37)"/><ellipse cx="28.4" cy="31" rx="6.4" ry="4.5" transform="rotate(-24 28.4 31)"/><path d="M10.2,37 V9.4 L34.4,2 V31 H32.2 V14.6 L12.4,20.6 V37 Z"/></g>
<g transform="translate(133.5,4) rotate(6) scale(0.66,0.9)"><ellipse cx="6.4" cy="37" rx="6.4" ry="4.5" transform="rotate(-24 6.4 37)"/><ellipse cx="28.4" cy="31" rx="6.4" ry="4.5" transform="rotate(-24 28.4 31)"/><path d="M10.2,37 V9.4 L34.4,2 V31 H32.2 V14.6 L12.4,20.6 V37 Z"/></g>
<g transform="translate(209.5,33.5) rotate(8) scale(0.44,0.52)"><ellipse cx="6.4" cy="37" rx="6.4" ry="4.5" transform="rotate(-24 6.4 37)"/><ellipse cx="28.4" cy="31" rx="6.4" ry="4.5" transform="rotate(-24 28.4 31)"/><path d="M10.2,37 V9.4 L34.4,2 V31 H32.2 V14.6 L12.4,20.6 V37 Z"/></g>
</g>
</pattern></defs>
<rect x="0" y="0" width="1239" height="65" fill="url(#mus)"/>
</svg>
<!-- left toolbar separators -->
<div class="b" style="left:0;top:464px;width:23px;height:1px;background:#343434"></div>
<div class="b" style="left:0;top:515px;width:23px;height:1px;background:#343434"></div>
<svg style="left:0;top:438px" width="24" height="126" viewBox="0 438 24 126">
<g fill="none" stroke="#d4e6ee" stroke-width="1.3">
<path d="M3.8,456.6 L17.6,441.8" stroke-width="1.4"/><path d="M6.8,453.4 V456.8 M10.9,449 V456.8 M15.8,447 V456.8" stroke-width="1.6"/>
<path d="M4.6,442.4 h2.6 v2.6 h-2.6 z M8.8,442.4 h2.6 v2.6 h-2.6 z" stroke-width="0.9"/><path d="M13,442.6 l1.6,1.8" stroke-width="1"/>
<path d="M7.2,472.4 H15 L11.1,478.2 Z"/><path d="M4.6,476.6 H8 M14.2,476.6 H17.6 M4.6,480 H17.6 M4.6,482.6 H17.6" stroke-width="1.2"/>
<path d="M5,496 V505 L11.4,500.5 Z"/><path d="M10,497.2 H17.6 M12.6,500.5 H17.6 M10,503.8 H17.6" stroke-width="1.2"/>
<rect x="3.6" y="522.2" width="8.8" height="8.8"/><path d="M8,524 V529.2 M5.4,526.6 H10.6" stroke-width="1.6"/>
<path d="M12.4,527.6 H18.8 V535.8 H10 V531"/><path d="M14,533.6 V530.4 L16.4,529.8 V532.6" stroke-width="0.9"/>
<rect x="3.6" y="544.2" width="8.8" height="8.8"/><path d="M5.4,548.6 H10.6" stroke-width="1.6"/>
<path d="M12.4,549.6 H18.8 V557.8 H10 V553"/><path d="M13.4,553.8 H16.6" stroke-width="1.1"/>
</g>
</svg>
<!-- scrollbar arrows, zoom slider -->
<svg style="left:23px;top:580px" width="1239" height="22" viewBox="23 580 1239 22">
<path d="M33.6,587 V596.4 L28,591.7 Z" fill="#5e5e5e"/>
<path d="M964.2,587 V596.4 L969.8,591.7 Z" fill="#5e5e5e"/>
<rect x="991" y="588" width="9" height="2.4" fill="#c8c8c8"/>
<rect x="1011" y="588.2" width="251" height="2.2" fill="#262626"/>
<path d="M1124.8,583.8 h7 v7.6 l-3.5,3.4 l-3.5,-3.4 z" fill="#c4c4c4"/>
<path d="M1013.8,597 v3.4 M1028.5,597 v3.4 M1043.2,597 v3.4 M1057.9,597 v3.4 M1072.6,597 v3.4 M1087.3,597 v3.4 M1102,597 v3.4 M1116.7,597 v3.4 M1131.4,597 v3.4 M1146.1,597 v3.4 M1160.8,597 v3.4 M1175.5,597 v3.4 M1190.2,597 v3.4 M1204.9,597 v3.4 M1219.6,597 v3.4 M1234.3,597 v3.4 M1249,597 v3.4" stroke="#b0b0b0" stroke-width="1"/>
</svg>
<!-- status separators -->
<div class="sep" style="left:939px;top:609px;height:15px;background:#565656"></div>
<div class="sep" style="left:995px;top:609px;height:15px;background:#3a3a3a"></div>
<div class="sep" style="left:1082px;top:609px;height:15px;background:#565656"></div>
<div class="sep" style="left:1183px;top:609px;height:15px;background:#565656"></div>
<!-- clipped remnants of window below -->
<div class="b" style="left:417px;top:626px;width:323px;height:8px;overflow:hidden;color:#0c0c0c;font-size:12px;line-height:12px"><span style="position:absolute;left:14px;top:-4px;white-space:nowrap">17 elementi</span><span style="position:absolute;left:97px;top:-4px;white-space:nowrap">1 elemento selezionato</span></div>
<div class="b" style="left:1262px;top:630px;width:60px;height:4px;overflow:hidden;color:#f0f0f0;font-size:12px;line-height:12px"><span style="position:absolute;left:1px;top:1px;white-space:nowrap">00:50</span></div>

<span class="t" style="left:25px;top:4.5px;font-size:13px;color:#cdcdcd;transform:scaleX(1.0118);">New project.ads - AquaSoft Stages</span>
<span class="t" style="left:8px;top:36px;font-size:12px;transform:scaleX(0.9298);"><u>F</u>ile</span>
<span class="t" style="left:38px;top:36px;font-size:12px;transform:scaleX(0.9660);"><u>E</u>dit</span>
<span class="t" style="left:70px;top:36px;font-size:12px;transform:scaleX(0.9725);">Scriptlets</span>
<span class="t" style="left:130px;top:36px;font-size:12px;transform:scaleX(0.9904);"><u>P</u>roject</span>
<span class="t" style="left:179px;top:36px;font-size:12px;transform:scaleX(1.0292);"><u>A</u>dd</span>
<span class="t" style="left:213px;top:36px;font-size:12px;transform:scaleX(0.8815);">E<u>x</u>tras</span>
<span class="t" style="left:255px;top:36px;font-size:12px;transform:scaleX(0.9459);"><u>W</u>izards</span>
<span class="t" style="left:308px;top:36px;font-size:12px;transform:scaleX(0.9697);">Work<u>s</u>pace</span>
<span class="t" style="left:378px;top:36px;font-size:12px;transform:scaleX(1.0127);"><u>H</u>elp</span>
<span class="t" style="left:10px;top:85.5px;font-size:12px;transform:scaleX(0.9577);"><u>N</u>ew</span>
<span class="t" style="left:62px;top:85.5px;font-size:12px;transform:scaleX(0.9651);"><u>O</u>pen...</span>
<span class="t" style="left:116px;top:85.5px;font-size:12px;transform:scaleX(0.8767);"><u>S</u>ave</span>
<span class="t" style="left:163px;top:85.5px;font-size:12px;transform:scaleX(1.0292);"><u>A</u>dd</span>
<span class="t" style="left:208px;top:85.5px;font-size:12px;transform:scaleX(1.0209);"><u>M</u>usic</span>
<span class="t" style="left:256px;top:85.5px;font-size:12px;transform:scaleX(0.9680);">Se<u>t</u>tings</span>
<span class="t" style="left:321.5px;top:85.5px;font-size:12px;color:#6e6e6e;transform:scaleX(0.9273);">Start</span>
<span class="t" style="left:361.5px;top:85.5px;font-size:12px;color:#6e6e6e;transform:scaleX(0.9814);">... from <u>h</u>ere</span>
<span class="t" style="left:449px;top:85.5px;font-size:12px;transform:scaleX(1.0126);">O<u>u</u>tput</span>
<span class="t" style="left:509.5px;top:85.5px;font-size:12px;transform:scaleX(0.9068);">Searc<u>h</u></span>
<span class="t" style="left:567px;top:85.5px;font-size:12px;transform:scaleX(0.9992);">Default</span>
<span class="t" style="left:621px;top:85.5px;font-size:12px;transform:scaleX(0.9880);">Storyboard</span>
<span class="t" style="left:695.5px;top:85.5px;font-size:12px;transform:scaleX(0.9889);">Imagelist</span>
<span class="t" style="left:760px;top:85.5px;font-size:12px;transform:scaleX(0.9909);">Toolbox</span>
<span class="t" style="left:817px;top:85.5px;font-size:12px;transform:scaleX(0.9972);">Vert. Timeline</span>
<span class="t" style="left:1302.5px;top:85.5px;color:#bcd0da;transform:scaleX(1.0151);">First steps</span>
<span class="t" style="left:10px;top:112px;transform:scaleX(0.9757);">Toolbox</span>
<span class="t" style="left:397px;top:112px;transform:scaleX(0.9836);">Layout designer</span>
<span class="t" style="left:1007.5px;top:112px;transform:scaleX(0.9773);">Properties</span>
<span class="t" style="left:1279.5px;top:128px;transform:scaleX(1.0151);">First steps</span>
<span class="t" style="left:24px;top:140.5px;transform:scaleX(0.9697);">Fade-ins</span>
<span class="t" style="left:109px;top:140.5px;transform:scaleX(0.9994);">Fade-outs</span>
<span class="t" style="left:212px;top:140.5px;transform:scaleX(0.9898);">Movement paths</span>
<span class="t" style="left:341px;top:140.5px;transform:scaleX(0.9254);">Files</span>
<span class="t" style="left:14.5px;top:166px;transform:scaleX(0.9920);">Objects</span>
<span class="t" style="left:80.5px;top:166.5px;transform:scaleX(1.0016);">Intelligent templates</span>
<span class="t" style="left:209.5px;top:166.5px;transform:scaleX(1.0176);">Image effects</span>
<span class="t" style="left:305.5px;top:166.5px;transform:scaleX(1.0643);">Text effects</span>
<span class="t" style="left:34.5px;top:189.5px;font-size:15px;color:#949494;transform:scaleX(0.9993);">Default</span>
<span class="t" style="left:14px;top:267px;color:#c4c4c4;transform:scaleX(1.0138);">Image</span>
<span class="t" style="left:74.5px;top:267px;color:#c4c4c4;transform:scaleX(0.9659);">Text</span>
<span class="t" style="left:124px;top:267px;color:#c4c4c4;transform:scaleX(1.0738);">Video</span>
<span class="t" style="left:177.5px;top:267px;color:#c4c4c4;transform:scaleX(1.0530);">Sound</span>
<span class="t" style="left:229px;top:267px;color:#c4c4c4;transform:scaleX(1.0475);">Chapter</span>
<span class="t" style="left:283px;top:267px;color:#c4c4c4;transform:scaleX(0.9659);">Flexi-C...</span>
<span class="t" style="left:11.5px;top:339px;color:#c4c4c4;transform:scaleX(0.9813);">Particle</span>
<span class="t" style="left:64px;top:339px;color:#c4c4c4;transform:scaleX(1.0762);">Subtitle</span>
<span class="t" style="left:118.5px;top:339px;color:#c4c4c4;transform:scaleX(0.9460);">Placeh...</span>
<span class="t" style="left:4px;top:388px;color:#6a6a6a;transform:scaleX(0.9467);">Search</span>
<span class="t" style="left:740px;top:138.5px;font-size:12px;transform:scaleX(0.9822);">Time mark:</span>
<span class="t" style="left:808px;top:138.5px;color:#5e5e5e;transform:scaleX(0.8851);">0 s</span>
<span class="t" style="left:547px;top:386.5px;color:#b4b4b4;transform:scaleX(0.9808);">00:00.000</span>
<span class="t" style="left:11px;top:418px;transform:scaleX(0.8987);">Timeline</span>
<span class="t" style="left:62.5px;top:418.5px;transform:scaleX(0.9942);">Storyboard</span>
<span class="t" style="left:626.5px;top:466.5px;font-size:12px;color:#141414;transform:scaleX(1.0001);">The project is empty.</span>
<span class="t" style="left:475px;top:496.5px;font-size:12px;color:#141414;transform:scaleX(1.0055);">To add images use the "Add" / "Images" menu item or click the "Plus" symbol.</span>
<span class="t" style="left:583.5px;top:532.5px;font-size:12px;color:#141414;transform:scaleX(0.9969);">Click here to add background music.</span>
<span class="t" style="left:451px;top:547.5px;font-size:12px;color:#141414;transform:scaleX(0.9938);">Note: the music track remains empty as long as the project doesn't contain any images.</span>
<span class="t" style="left:1003.5px;top:609px;color:#c4c4c4;transform:scaleX(1.0133);">Duration: 0,0 s</span>
<span class="t" style="left:1093px;top:609px;color:#c4c4c4;transform:scaleX(1.0114);">Aspect ratio 16:9</span>
<span class="t" style="left:1192.5px;top:609px;color:#c4c4c4;transform:scaleX(0.9714);">D 10.3.02 - De</span>
</body></html>
